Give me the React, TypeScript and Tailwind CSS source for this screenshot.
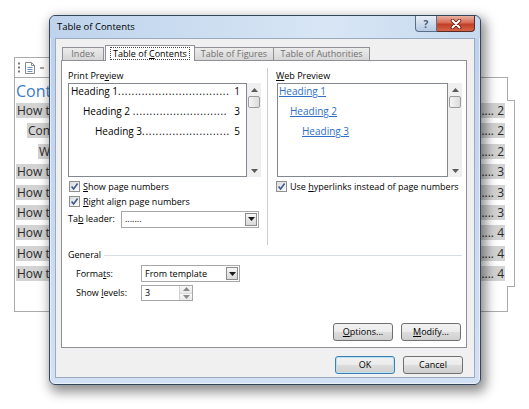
import React from "react";

type Row = { text: string; page: number; level: 0 | 1 | 2 };

const docRows: Row[] = [
  { text: "How to", page: 2, level: 0 },
  { text: "Compile", page: 2, level: 1 },
  { text: "Work", page: 2, level: 2 },
  { text: "How to", page: 3, level: 0 },
  { text: "How to", page: 3, level: 0 },
  { text: "How to", page: 3, level: 0 },
  { text: "How to", page: 4, level: 0 },
  { text: "How to", page: 4, level: 0 },
  { text: "How to", page: 4, level: 0 },
];

const indent = ["ml-[1px]", "ml-[12px]", "ml-[23px]"];

function Tri({ up, color = "#1a1a1a" }: { up?: boolean; color?: string }) {
  return (
    <svg width="7" height="4" viewBox="0 0 7 4">
      <path d={up ? "M0 4 L3.5 0 L7 4Z" : "M0 0 L7 0 L3.5 4Z"} fill={color} />
    </svg>
  );
}

function Check() {
  return (
    <span className="flex h-[11px] w-[11px] shrink-0 items-center justify-center border border-[#8e8f8f] bg-gradient-to-br from-[#dcdcdc] to-[#fbfbfb]">
      <svg width="9" height="9" viewBox="0 0 9 9">
        <path d="M1.6 4.6 L3.6 7 L7.6 1.6" fill="none" stroke="#3b5a8c" strokeWidth="1.6" />
      </svg>
    </span>
  );
}

function CheckRow({ children, top }: { children: React.ReactNode; top?: boolean }) {
  return (
    <div className={`flex h-[15px] items-center gap-[3px] pl-px ${top ? "mt-[2px]" : ""}`}>
      <Check />
      <span>{children}</span>
    </div>
  );
}

function Combo({ value, width }: { value: string; width: string }) {
  return (
    <div className={`flex h-[17px] border border-[#a7a7a7] bg-white ${width}`}>
      <span className="flex flex-1 items-center pl-[3px]">{value}</span>
      <span className="m-px flex w-[12px] items-center justify-center border border-[#8c8c8c] bg-gradient-to-b from-[#f6f6f6] to-[#d9d9d9]">
        <Tri />
      </span>
    </div>
  );
}

function ScrollBar() {
  return (
    <div className="flex h-full w-[14px] flex-col bg-[#efefef]">
      <div className="flex h-[13px] items-center justify-center">
        <Tri up color="#5a5a5a" />
      </div>
      <div className="mx-[1px] h-[12px] rounded-[2px] border border-[#9b9b9b] bg-gradient-to-r from-[#f5f5f5] to-[#dcdcdc]" />
      <div className="flex-1" />
      <div className="flex h-[12px] items-center justify-center">
        <Tri color="#5a5a5a" />
      </div>
    </div>
  );
}

function Entry({ label, dots, page, pad }: { label: string; dots: number; page: number; pad: string }) {
  return (
    <div className={`flex h-[20px] items-start justify-between pr-[6px] text-[10px] leading-[12px] ${pad}`}>
      <span className="whitespace-pre">
        {label}
        <span className="tracking-[0.75px]">{".".repeat(dots)}</span>
      </span>
      <span>{page}</span>
    </div>
  );
}

function LinkEntry({ label, pad }: { label: string; pad: string }) {
  return (
    <div className={`h-[20px] text-[10px] leading-[12px] ${pad}`}>
      <span className="text-[#2f6fc6] underline underline-offset-[1px]">{label}</span>
    </div>
  );
}

function Button({ children, primary }: { children: React.ReactNode; primary?: boolean }) {
  return (
    <div
      className={`flex h-[18px] w-[60px] items-center justify-center rounded-[3px] border bg-[linear-gradient(#f2f2f2,#ebebeb_50%,#dddddd_50%,#cfcfcf)] ${
        primary ? "border-[#3c7fb1] shadow-[inset_0_0_0_1px_#b7e2f6]" : "border-[#707070]"
      }`}
    >
      {children}
    </div>
  );
}

function Tab({ children, width }: { children: React.ReactNode; width: string }) {
  return (
    <div
      className={`flex h-[13px] items-center justify-center border border-b-0 border-[#8e9196] bg-gradient-to-b from-[#ececec] to-[#d6d6d6] text-[#707070] ${width}`}
    >
      {children}
    </div>
  );
}

function DocBehind() {
  return (
    <div className="pl-[14px] pt-[57px]">
      <div className="flex h-[20px] w-[100px] items-center gap-[4px] border border-b-0 border-[#ababab] pl-[2px]">
        <svg width="4" height="11" viewBox="0 0 4 11">
          <rect x="1" y="0.5" width="2" height="2" fill="#7a7a7a" />
          <rect x="1" y="4.5" width="2" height="2" fill="#7a7a7a" />
          <rect x="1" y="8.5" width="2" height="2" fill="#7a7a7a" />
        </svg>
        <svg width="10" height="12" viewBox="0 0 10 12">
          <path d="M0.5 0.5 H6.5 L9.5 3.5 V11.5 H0.5Z" fill="#fff" stroke="#8a8a8a" />
          <path d="M6.5 0.5 V3.5 H9.5" fill="none" stroke="#8a8a8a" />
          <path d="M2.5 5.5 H7.5 M2.5 7.5 H7.5 M2.5 9.5 H7.5" stroke="#6f93c0" />
        </svg>
        <svg width="6" height="6" viewBox="0 0 6 6">
          <path d="M1 3 H5" stroke="#6a6a6a" strokeWidth="1.2" />
        </svg>
      </div>
      <div className="flex items-start">
        <div className="h-[235px] w-[494px] border border-[#ababab]">
          <div className="h-[25px] pl-px pt-[5px] text-[16px] leading-none text-[#3d7cc9]">Contents</div>
          {docRows.map((r, i) => (
            <div key={i} className="h-[20.4px]">
              <div
                className={`mr-[2px] flex h-[15px] items-center justify-between bg-[#d3d3d3] pl-px text-[12px] leading-[15px] text-[#2a2a2a] ${indent[r.level]}`}
              >
                <span>{r.text}</span>
                <span className="pr-px">..... {r.page}</span>
              </div>
            </div>
          ))}
        </div>
        <div className="-ml-px mt-[23px] h-[187px] w-[8px] border-y border-r border-[#ababab] bg-white" />
      </div>
    </div>
  );
}

function Dialog() {
  return (
    <div className="absolute left-[49px] top-[15px] flex h-[370px] w-[432px] flex-col rounded-[6px] border border-[#34465c] bg-gradient-to-b from-[#bcd1eb] to-[#d2e1f3] shadow-[inset_0_0_0_1px_rgba(255,255,255,0.55),3px_5px_12px_2px_rgba(0,0,0,0.45)]">
      {/* title bar */}
      <div className="flex h-[22px] items-start justify-between rounded-t-[6px] bg-[linear-gradient(to_right,#bed3ec,#d8e6f5_65%,#c6d9ef)]">
        <span className="pl-[7px] pt-[4px] text-[9.5px] leading-[14px] text-black">Table of Contents</span>
        <div className="mr-[5px] flex">
          <div className="flex h-[16px] w-[22px] items-center justify-center rounded-bl-[4px] border border-t-0 border-[#5b6e87] bg-gradient-to-b from-[#e6eef8] to-[#b6cae3] text-[10px] font-bold leading-none text-[#4a5a70]">
            ?
          </div>
          <div className="flex h-[16px] w-[38px] items-center justify-center rounded-br-[4px] border border-l-0 border-t-0 border-[#5b2a22] bg-[linear-gradient(#eab0a2,#d86a52_45%,#c23f27_55%,#d56548)]">
            <svg width="12" height="10" viewBox="0 0 12 10">
              <path d="M2.5 1.5 L9.5 8.5 M9.5 1.5 L2.5 8.5" stroke="#5a1c12" strokeWidth="3.6" strokeLinecap="round" />
              <path d="M2.5 1.5 L9.5 8.5 M9.5 1.5 L2.5 8.5" stroke="#ffffff" strokeWidth="2" strokeLinecap="round" />
            </svg>
          </div>
        </div>
      </div>

      {/* client area */}
      <div className="mx-[5px] mb-[6px] flex flex-1 flex-col border border-[#9aaac0] bg-[#f0f0f0] px-[5px] pt-[6px]">
        {/* tabs */}
        <div className="flex h-[15px] items-end">
          <div className="ml-px">
            <Tab width="w-[42px]">Index</Tab>
          </div>
          <div className="relative z-10 ml-px -mb-px flex h-[16px] w-[90px] items-center justify-center border border-b-0 border-[#8e9196] bg-white">
            <span className="border border-dotted border-[#444] px-[2px] leading-[11px]">
              Table of <u>C</u>ontents
            </span>
          </div>
          <Tab width="w-[80px] -ml-px">Table of Figures</Tab>
          <Tab width="w-[97px] -ml-px">Table of Authorities</Tab>
        </div>

        {/* tab panel */}
        <div className="flex h-[288px] w-[406px] flex-col border border-[#8e9196] bg-white pl-[6px] pt-[7px]">
          <div className="flex h-[177px]">
            {/* print preview column */}
            <div className="flex w-[193px] flex-col">
              <div className="flex h-[15px] items-center">
                Print Pre<u>v</u>iew
              </div>
              <div className="flex h-[94px]">
                <div className="w-[179px] border border-[#828790] bg-white pt-px">
                  <Entry label="Heading 1" dots={33} page={1} pad="pl-[2px]" />
                  <Entry label="Heading 2 " dots={28} page={3} pad="pl-[14px]" />
                  <Entry label="Heading 3" dots={26} page={5} pad="pl-[26px]" />
                </div>
                <ScrollBar />
              </div>
              <CheckRow top>
                <u>S</u>how page numbers
              </CheckRow>
              <CheckRow>
                <u>R</u>ight align page numbers
              </CheckRow>
              <div className="mt-px flex h-[18px] items-center">
                <span className="w-[53px]">
                  Ta<u>b</u> leader:
                </span>
                <Combo value="......." width="w-[138px]" />
              </div>
            </div>

            <div className="ml-[6px] h-full w-px bg-[#cccccc]" />

            {/* web preview column */}
            <div className="ml-[8px] flex w-[187px] flex-col">
              <div className="flex h-[15px] items-center">
                <u>W</u>eb Preview
              </div>
              <div className="ml-px flex h-[94px]">
                <div className="w-[171px] border border-[#828790] bg-white pt-px">
                  <LinkEntry label="Heading 1" pad="pl-[1px]" />
                  <LinkEntry label="Heading 2" pad="pl-[12px]" />
                  <LinkEntry label="Heading 3" pad="pl-[24px]" />
                </div>
                <ScrollBar />
              </div>
              <div className="mt-[2px] flex h-[15px] items-center gap-[3px]">
                <Check />
                <span>
                  Use <u>h</u>yperlinks instead of page numbers
                </span>
              </div>
            </div>
          </div>

          {/* general */}
          <div className="mt-[3px] flex h-[14px] items-center pr-[4px]">
            <span>General</span>
            <div className="ml-[3px] h-px flex-1 bg-[#d5dfe5]" />
          </div>
          <div className="mt-[3px] flex h-[17px] items-center pl-[8px]">
            <span className="w-[65px]">
              Forma<u>t</u>s:
            </span>
            <Combo value="From template" width="w-[99px]" />
          </div>
          <div className="mt-[3px] flex h-[16px] items-center pl-[8px]">
            <span className="w-[65px]">
              Show <u>l</u>evels:
            </span>
            <div className="flex h-[16px] w-[52px] border border-[#a7a7a7] bg-white">
              <span className="flex flex-1 items-center pl-[3px]">3</span>
              <span className="flex w-[13px] flex-col border-l border-[#d0d0d0]">
                <span className="flex flex-1 items-center justify-center border-b border-[#d9d9d9] bg-gradient-to-b from-[#f8f8f8] to-[#e9e9e9]">
                  <Tri up color="#8a8a8a" />
                </span>
                <span className="flex flex-1 items-center justify-center bg-gradient-to-b from-[#f8f8f8] to-[#e9e9e9]">
                  <Tri color="#8a8a8a" />
                </span>
              </span>
            </div>
          </div>

          <div className="mt-[22px] flex justify-end gap-[8px] pr-[5px]">
            <Button>
              <u>O</u>ptions...
            </Button>
            <Button>
              <u>M</u>odify...
            </Button>
          </div>
        </div>

        {/* dialog buttons */}
        <div className="mt-[8px] flex justify-end gap-[8px] pr-[6px]">
          <Button primary>OK</Button>
          <Button>Cancel</Button>
        </div>
      </div>
    </div>
  );
}

export default function App() {
  return (
    <div className="relative h-[409px] w-[529px] overflow-hidden bg-white font-['Open_Sans','Liberation_Sans',sans-serif] text-[9px] leading-[12px] text-black">
      <DocBehind />
      <Dialog />
    </div>
  );
}
